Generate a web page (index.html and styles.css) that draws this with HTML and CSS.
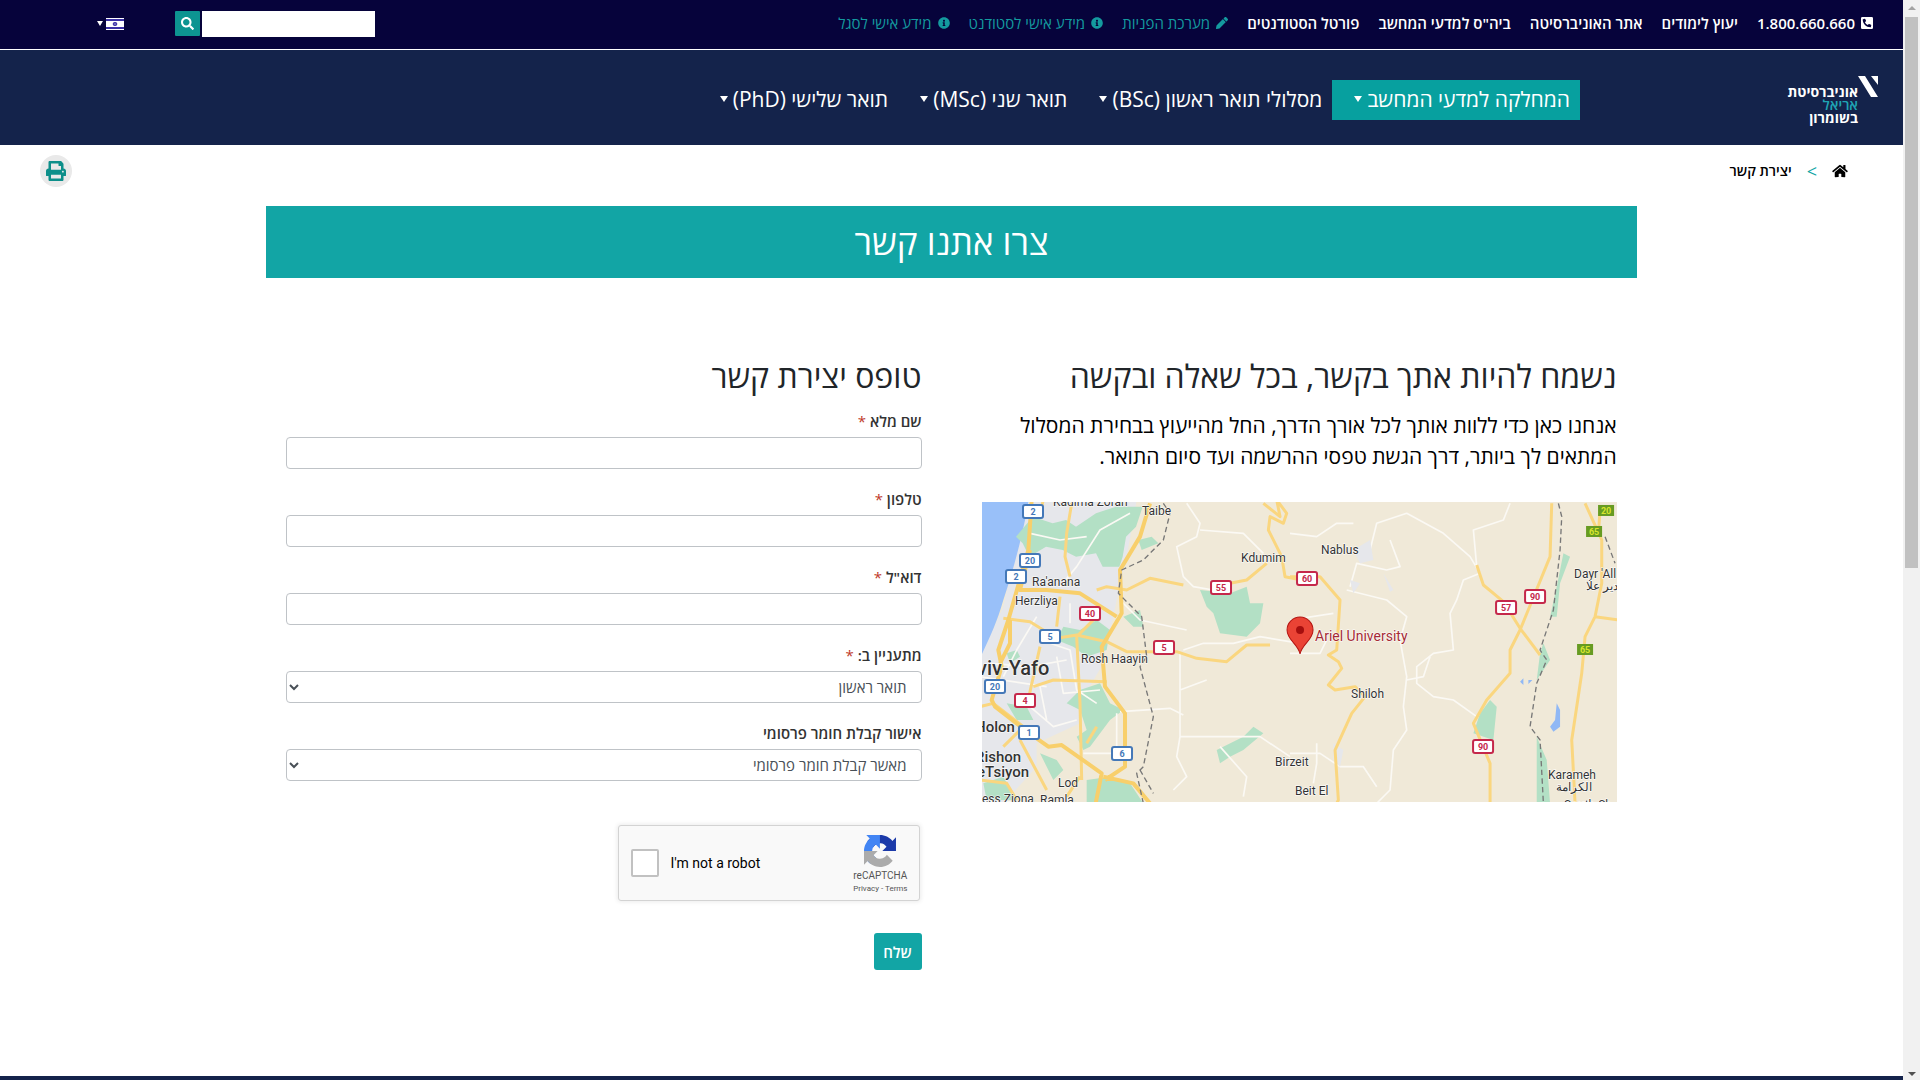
FILE: index.html
```
<!DOCTYPE html>
<html lang="he" dir="rtl">
<head>
    <meta charset="utf-8">
    <title>יצירת קשר</title>
    <link rel="stylesheet" href="styles.css">
</head>
<body>
<div class="scrollbar" aria-hidden="true">
    <span class="arrow up"></span>
    <span class="thumb"></span>
    <span class="arrow down"></span>
</div>
<div class="page">
    <div class="topbar">
        <nav class="top-links">
            <a href="tel:1800660660"><svg class="icon" viewBox="0 0 448 512"><path d="M400 32H48A48 48 0 0 0 0 80v352a48 48 0 0 0 48 48h352a48 48 0 0 0 48-48V80a48 48 0 0 0-48-48zm-16.39 307.37l-15 65A15 15 0 0 1 354 416C194 416 64 286.29 64 126a15.7 15.7 0 0 1 11.63-14.61l65-15A18.23 18.23 0 0 1 144 96a16.27 16.27 0 0 1 13.79 9.09l30 70A17.9 17.9 0 0 1 189 181a17 17 0 0 1-5.5 11.61l-37.89 31a231.91 231.91 0 0 0 110.78 110.78l31-37.89A17 17 0 0 1 299 291a17.85 17.85 0 0 1 5.91 1.21l70 30A16.25 16.25 0 0 1 384 336a17.41 17.41 0 0 1-.39 3.37z"/></svg>1.800.660.660</a>
            <a href="#">יעוץ לימודים</a>
            <a href="#">אתר האוניברסיטה</a>
            <a href="#">ביה"ס למדעי המחשב</a>
            <a href="#">פורטל הסטודנטים</a>
            <a href="#" class="teal"><svg class="icon" viewBox="0 0 512 512"><path d="M497.9 142.1l-46.1 46.1c-4.7 4.7-12.3 4.7-17 0l-111-111c-4.7-4.7-4.7-12.3 0-17l46.1-46.1c18.7-18.7 49.1-18.7 67.9 0l60.1 60.1c18.8 18.7 18.8 49.1 0 67.9zM284.2 99.8L21.6 362.4.4 483.9c-2.9 16.4 11.4 30.6 27.8 27.8l121.5-21.3 262.6-262.6c4.7-4.7 4.7-12.3 0-17l-111-111c-4.8-4.7-12.4-4.7-17.1 0z"/></svg>מערכת הפניות</a>
            <a href="#" class="teal"><svg class="icon" viewBox="0 0 512 512"><path d="M256 8C119.043 8 8 119.083 8 256c0 136.997 111.043 248 248 248s248-111.003 248-248C504 119.083 392.957 8 256 8zm0 110c23.196 0 42 18.804 42 42s-18.804 42-42 42-42-18.804-42-42 18.804-42 42-42zm56 254c0 6.627-5.373 12-12 12h-88c-6.627 0-12-5.373-12-12v-24c0-6.627 5.373-12 12-12h12v-64h-12c-6.627 0-12-5.373-12-12v-24c0-6.627 5.373-12 12-12h64c6.627 0 12 5.373 12 12v100h12c6.627 0 12 5.373 12 12v24z"/></svg>מידע אישי לסטודנט</a>
            <a href="#" class="teal"><svg class="icon" viewBox="0 0 512 512"><path d="M256 8C119.043 8 8 119.083 8 256c0 136.997 111.043 248 248 248s248-111.003 248-248C504 119.083 392.957 8 256 8zm0 110c23.196 0 42 18.804 42 42s-18.804 42-42 42-42-18.804-42-42 18.804-42 42-42zm56 254c0 6.627-5.373 12-12 12h-88c-6.627 0-12-5.373-12-12v-24c0-6.627 5.373-12 12-12h12v-64h-12c-6.627 0-12-5.373-12-12v-24c0-6.627 5.373-12 12-12h64c6.627 0 12 5.373 12 12v100h12c6.627 0 12 5.373 12 12v24z"/></svg>מידע אישי לסגל</a>
        </nav>
        <form class="search">
            <input type="text" aria-label="חיפוש">
            <button type="button" aria-label="חפש"><svg viewBox="0 0 512 512"><path d="M505 442.7L405.3 343c-4.5-4.5-10.6-7-17-7H372c27.6-35.3 44-79.7 44-128C416 93.1 322.9 0 208 0S0 93.1 0 208s93.1 208 208 208c48.3 0 92.7-16.4 128-44v16.3c0 6.4 2.5 12.5 7 17l99.7 99.7c9.4 9.4 24.6 9.4 33.9 0l28.3-28.3c9.4-9.4 9.4-24.6.1-34zM208 336c-70.7 0-128-57.2-128-128 0-70.7 57.2-128 128-128 70.7 0 128 57.2 128 128 0 70.7-57.2 128-128 128z"/></svg></button>
        </form>
        <a href="#" class="lang" aria-label="שפה">
            <svg class="flag" viewBox="0 0 18 12"><path fill="#fff" d="M0 0h18v12H0z"/><path fill="#3a2fa5" d="M0 1h18v2H0zM0 9h18v2H0z"/><path fill="none" stroke="#3a2fa5" d="M9 4l2 3H7zM9 8L7 5h4z"/></svg>
            <span class="caret"></span>
        </a>
    </div>

    <header class="header">
        <a href="#" class="logo">
            <svg viewBox="0 0 20 21"><path d="M0 0h7l13 21h-7zM13 0h7v9z"/></svg>
            <span class="logo-text">אוניברסיטת<br><em>אריאל</em><br>בשומרון</span>
        </a>
        <nav class="main-nav">
            <a href="#" class="active">המחלקה למדעי המחשב<span class="caret"></span></a>
            <a href="#">מסלולי תואר ראשון (BSc)<span class="caret"></span></a>
            <a href="#">תואר שני (MSc)<span class="caret"></span></a>
            <a href="#">תואר שלישי (PhD)<span class="caret"></span></a>
        </nav>
    </header>

    <div class="tools">
        <nav class="breadcrumb">
            <a href="#" aria-label="דף הבית"><svg viewBox="0 0 576 512"><path d="M280.37 148.26L96 300.11V464a16 16 0 0 0 16 16l112.06-.29a16 16 0 0 0 15.92-16V368a16 16 0 0 1 16-16h64a16 16 0 0 1 16 16v95.64a16 16 0 0 0 16 16.05L464 480a16 16 0 0 0 16-16V300L295.67 148.26a12.19 12.19 0 0 0-15.3 0zM571.6 251.47L488 182.56V44.05a12 12 0 0 0-12-12h-56a12 12 0 0 0-12 12v72.61L318.47 43a48 48 0 0 0-61 0L4.34 251.47a12 12 0 0 0-1.6 16.9l25.5 31A12 12 0 0 0 45.15 301l235.22-193.74a12.19 12.19 0 0 1 15.3 0L530.9 301a12 12 0 0 0 16.9-1.6l25.5-31a12 12 0 0 0-1.7-16.93z"/></svg></a>
            <span class="sep">&gt;</span>
            <span>יצירת קשר</span>
        </nav>
        <button type="button" class="print" aria-label="הדפסה"><svg viewBox="0 0 512 512"><path d="M448 192V77.25c0-8.49-3.37-16.62-9.37-22.63L393.37 9.37c-6-6-14.14-9.37-22.63-9.37H96C78.33 0 64 14.33 64 32v160c-35.35 0-64 28.65-64 64v112c0 8.84 7.16 16 16 16h48v96c0 17.67 14.33 32 32 32h320c17.67 0 32-14.33 32-32v-96h48c8.84 0 16-7.16 16-16V256c0-35.35-28.65-64-64-64zm-64 256H128v-96h256v96zm0-224H128V64h192v48c0 8.84 7.16 16 16 16h48v96zm48 72c-13.25 0-24-10.75-24-24 0-13.26 10.75-24 24-24s24 10.74 24 24c0 13.25-10.75 24-24 24z"/></svg></button>
    </div>

    <main class="container">
        <h1>צרו אתנו קשר</h1>
        <div class="columns">
            <section class="about">
                <h2>נשמח להיות אתך בקשר, בכל שאלה ובקשה</h2>
                <p>אנחנו כאן כדי ללוות אותך לכל אורך הדרך, החל מהייעוץ בבחירת המסלול המתאים לך ביותר, דרך הגשת טפסי ההרשמה ועד סיום התואר.</p>
                <svg class="map" viewBox="0 0 635 300" preserveAspectRatio="xMidYMid slice" direction="ltr">
                    <rect width="635" height="300" fill="#f0e9d8"/>
                    <!-- west -->
                    <g transform="scale(.33333) translate(-36 -36)">
                        <path class="urban" d="M170 30L500 30 470 200 440 330 400 520 330 640 330 700 200 760 200 830 100 940 30 940 30 500 100 350z"/>
                        <path class="sea" d="M30 30H176C160 130 130 240 100 330 80 400 60 440 30 505z"/>
                        <path class="park" d="M188 80l60 20 40-10 30 20 60-40 60-20 80 0-20 60-30 30-10 60-10 30-50 0-20-40-60 10-40-20-50-10-50 30-20-40-20-20zM505 150l40-10 20 20-50 20zM280 410l50 10 50-30 40 30-10 60-60 20-40-30-50-20zM460 380l50-20 10 50-30 0zM330 600l60-20 30 60 40 20-40 30-60 80-20 10-20-40 30-20-20-60-40-20zM350 870l70-10 60 20 40 60H350zM210 790l50 20 20 30-30 30zM110 640l60 10 20 40-50 0zM40 880l60-20 40 70-90 0zM690 300l90 10 50-20 10 50 40 0-10 60-40 40-80-10-20-60-20-20zM740 780l80-40 30-30 30 20-60 50-40 20-30 20zM110 490l30-10 10 20-30 20z"/>
                        <path class="lane" d="M480 70l-90 50-70 110-50 60M180 130l90 20 80-10M200 380l-60 100-40 80M240 460l60 20 20 120 60 40M180 650l70 60 70-20M60 520l120 10 110-20M210 590l20 100M300 340v60M440 670v120l-100 0M650 40l40 60-10 40-60 30 20 90 30 30 60 10M690 120l130 10 60 60M640 480l60-20 90 0 80-20 120 20M630 490l0 250-10 60 30 60-40 40M450 665l150-10 40 20M630 600l80-30M630 740l240 0 90 60M750 770l80 90-10 60M450 330l60 60 140 30M30 560l200 30M260 500l20 110 110-10"/>
                        <path class="road" d="M220 30L215 50M305 40L290 130 285 200 300 260M100 385l80 10 80 50 60-10 90 20 60 30 150 0 60 20 90 10 60-50h70M380 300l30-10 60 10 70-35 100 20M270 320l-10 90M190 590l60-20 160 5M210 470l-40 180M30 650l40-10 90 70-60 60M150 750l80 150M320 440l10 200 5 230M330 860l-40 60M380 710l-30 50M780 280l50-10 60-50M880 40l50 40-10-50 30 40-10 30-40-20-5 40 40 80 10 60 50 10M30 870l80 10 30 50M320 440l60-60"/>
                        <path class="highway" d="M185 30l-10 150-40 140-20 70-30 90 10 50-30 100 10 20 90 70 70 50 40-5 120 85-20 100M120 390l0 70-30 60M180 180l-30 120 80 0 100 10 110 70M540 40l-30 100-60 100 5 130-60 100 10 120 60 80 0 160-60 40M400 860l90 20 50 60"/>
                        <path class="border" d="M580 40l20 30-20 80-60 60-65 30-10 70 70 70 15 120-20 30 40 150-30 150-20 20 20 90M510 840l40 70"/>
                    </g>
                    <!-- east -->
                    <g transform="scale(.33333) translate(924 -36)">
                        <path class="lane" d="M0 130l80 10 60-40 50 0M240 180l20-80 90-30 110 60 80 70 30 50-50 20-20 60-20 40 10 110-60 10-50 40 0 50 50 40 60 10 70 50M660 40l-20 50-90 30 10 110M350 570l50-10 20-60M170 300l120 30 60 50-20 70 20 110-10 90 10 70-40 60-10 120-40 40M180 290l20-70 90 20 40-10-30-80M0 790l90 0 60 40 70 0 40 60M70 880l10-60 0-60M0 490l90 0 20-40M0 390l130-20"/>
                        <path class="urban" d="M190 180l50-30 10 60-40 10zM130 760l30 20-10 50-20-20zM280 250l30 50-10 5zM180 270l30 10-20 30z"/>
                        <path class="park" d="M820 190l20 10-30 80-10 100-20 0 20-90zM760 460l20 50-40 60 10-80zM600 630l20 20-10 100-60-20 20-60zM740 740l30 70 10 130-40 0z"/>
                        <path class="lake" d="M800 640l10 20 0 50-20 15-10-15 15-20zM690 575l10-10 0 20zM715 570l12 0-12 12z"/>
                        <path class="road" d="M0 260h90l60 70-10 150-25 15 30 20 10 20-40 50 20 15 60-10 30 30-40 50-50 110 10 150-30 60M560 225l20 60 60 50 50 80 60 80M785 40l-5 160-90 220-30 60 0 70-70 80-40 70 50 120 0 120M885 40l50 110 0 130-20 100-30 60-10 110-30 200 10 190M915 380l70 10M930 60l-5 70"/>
                        <path class="border" d="M805 40l10 40-5 100-20 180-20 60-20 60 20 30-30 70-20 130 30 40 10 190M945 140l30 80"/>
                    </g>
                    <!-- place names -->
                    <g class="places">
                        <text x="71" y="4">Kadima Zoran</text>
                        <text x="160" y="13">Taibe</text>
                        <text x="50" y="84">Ra'anana</text>
                        <text x="33" y="103">Herzliya</text>
                        <text x="99" y="161">Rosh Haayin</text>
                        <text x="76" y="285">Lod</text>
                        <text x="58" y="302">Ramla</text>
                        <text x="0" y="301">ess Ziona</text>
                        <text x="259" y="60">Kdumim</text>
                        <text x="339" y="52">Nablus</text>
                        <text x="369" y="196">Shiloh</text>
                        <text x="293" y="264">Birzeit</text>
                        <text x="313" y="293">Beit El</text>
                        <text x="592" y="76">Dayr 'All</text>
                        <text x="604" y="88">دير علا</text>
                        <text x="566" y="277">Karameh</text>
                        <text x="574" y="289">الكرامة</text>
                        <text x="582" y="307">South Sh</text>
                        <text class="mid" x="-7" y="230">Holon</text>
                        <text class="mid" x="-7" y="260">Rishon</text>
                        <text class="mid" x="-5" y="275">eTsiyon</text>
                        <text class="big" x="-5" y="173">viv-Yafo</text>
                        <text class="pin-label" x="333" y="139">Ariel University</text>
                    </g>
                    <g class="shield blue">
                        <rect x="41" y="3" width="20" height="13" rx="2"/><text x="51" y="13">2</text>
                        <rect x="38" y="52" width="20" height="13" rx="2"/><text x="48" y="62">20</text>
                        <rect x="24" y="68" width="20" height="13" rx="2"/><text x="34" y="78">2</text>
                        <rect x="58" y="128" width="20" height="13" rx="2"/><text x="68" y="138">5</text>
                        <rect x="3" y="178" width="20" height="13" rx="2"/><text x="13" y="188">20</text>
                        <rect x="37" y="224" width="20" height="13" rx="2"/><text x="47" y="234">1</text>
                        <rect x="130" y="245" width="20" height="13" rx="2"/><text x="140" y="255">6</text>
                    </g>
                    <g class="shield red">
                        <rect x="98" y="105" width="20" height="13" rx="2"/><text x="108" y="115">40</text>
                        <rect x="229" y="79" width="20" height="13" rx="2"/><text x="239" y="89">55</text>
                        <rect x="172" y="139" width="20" height="13" rx="2"/><text x="182" y="149">5</text>
                        <rect x="33" y="192" width="20" height="13" rx="2"/><text x="43" y="202">4</text>
                        <rect x="315" y="70" width="20" height="13" rx="2"/><text x="325" y="80">60</text>
                        <rect x="514" y="99" width="20" height="13" rx="2"/><text x="524" y="109">57</text>
                        <rect x="543" y="88" width="20" height="13" rx="2"/><text x="553" y="98">90</text>
                        <rect x="491" y="238" width="20" height="13" rx="2"/><text x="501" y="248">90</text>
                    </g>
                    <g class="shield green">
                        <rect x="616" y="3" width="16" height="11"/><text x="624" y="12">20</text>
                        <rect x="604" y="24" width="16" height="11"/><text x="612" y="33">65</text>
                        <rect x="595" y="142" width="16" height="11"/><text x="603" y="151">65</text>
                    </g>
                    <path fill="#ea4335" stroke="#b31412" d="M318 152c-2-10-13-14-13-24a13 13 0 0 1 26 0c0 10-11 14-13 24z"/>
                    <circle cx="318" cy="128" r="4" fill="#a50e0e"/>
                </svg>
            </section>

            <section>
                <h2>טופס יצירת קשר</h2>
                <form class="contact-form">
                    <div class="field">
                        <label for="name">שם מלא <span class="req">*</span></label>
                        <input type="text" id="name">
                    </div>
                    <div class="field">
                        <label for="phone">טלפון <span class="req">*</span></label>
                        <input type="tel" id="phone">
                    </div>
                    <div class="field">
                        <label for="email">דוא"ל <span class="req">*</span></label>
                        <input type="email" id="email">
                    </div>
                    <div class="field">
                        <label for="interest">מתעניין ב: <span class="req">*</span></label>
                        <select id="interest"><option>תואר ראשון</option><option>תואר שני</option></select>
                    </div>
                    <div class="field">
                        <label for="ads">אישור קבלת חומר פרסומי</label>
                        <select id="ads"><option>מאשר קבלת חומר פרסומי</option></select>
                    </div>
                    <div class="captcha" dir="ltr">
                        <input type="checkbox" id="robot">
                        <label for="robot">I'm not a robot</label>
                        <div class="captcha-brand">
                            <svg viewBox="0 0 64 64"><path fill="#1c3aa9" d="M64 31.955l-.033-1.37V4.687l-7.16 7.16C50.948 4.674 42.033.093 32.05.093c-10.4 0-19.622 4.96-25.458 12.64l11.736 11.86a15.55 15.55 0 0 1 4.754-5.334c2.05-1.6 4.952-2.906 8.968-2.906.485 0 .86.057 1.135.163 4.976.393 9.288 3.14 11.828 7.124l-8.307 8.307L64 31.953"/><path fill="#4285f4" d="M31.862.094l-1.37.033H4.594l7.16 7.16C4.58 13.147 0 22.06 0 32.046c0 10.4 4.96 19.622 12.64 25.458L24.5 45.768a15.55 15.55 0 0 1-5.334-4.754c-1.6-2.05-2.906-4.952-2.906-8.968 0-.485.057-.86.163-1.135.393-4.976 3.14-9.288 7.124-11.828l8.307 8.307L31.86.095"/><path fill="#ababab" d="M.001 32.045l.033 1.37v25.898l7.16-7.16c5.86 7.173 14.774 11.754 24.76 11.754 10.4 0 19.622-4.96 25.458-12.64l-11.736-11.86a15.55 15.55 0 0 1-4.754 5.334c-2.05 1.6-4.952 2.906-8.968 2.906-.485 0-.86-.057-1.135-.163-4.976-.393-9.288-3.14-11.828-7.124l8.307-8.307c-10.522.04-22.4.066-27.295-.005"/></svg>
                            <span class="captcha-name">reCAPTCHA</span>
                            <span class="captcha-links"><a href="#">Privacy</a> - <a href="#">Terms</a></span>
                        </div>
                    </div>
                    <button type="button" class="submit">שלח</button>
                </form>
            </section>
        </div>
    </main>
    <footer class="footer"></footer>
</div>
</body>
</html>
```
FILE: styles.css
```
* { box-sizing: border-box; }
html, body { height: 100%; }
body { margin: 0; display: flex; overflow: hidden; background: #fff; color: #212529; font-family: "Open Sans", "Noto Sans Hebrew", Arial, sans-serif; font-size: 15px; }
a { color: inherit; text-decoration: none; }
svg { fill: currentColor; display: block; }
input, select, button { font-family: inherit; font-size: 15px; }

/* פס גלילה */
.scrollbar { width: 17px; height: 100vh; background: #f1f1f1; display: flex; flex-direction: column; align-items: center; flex-shrink: 0; }
.thumb { width: 13px; flex: 0 0 51%; background: #c1c1c1; }
.arrow { border: 4px solid transparent; margin: 4px 0; }
.arrow.up { border-bottom-color: #a3a3a3; border-top: 0; margin: 6px 0 7px; }
.arrow.down { border-top-color: #505050; border-bottom: 0; margin-top: auto; }

.page { flex: 1; display: flex; flex-direction: column; min-height: 100vh; }

/* סרגל עליון */
.topbar { display: flex; align-items: center; height: 50px; padding: 0 30px 2px 97px; background: #06033b; border-bottom: 1px solid #fff; color: #fff; }
.top-links { display: flex; gap: 19px; font-weight: 600; line-height: 20px; padding-bottom: 2px; }
.top-links a { display: flex; align-items: center; gap: 6px; }
.top-links .teal { color: #149a9f; font-weight: 400; }
.icon { width: 12px; height: 14px; }
.search { display: flex; gap: 2px; margin-right: auto; }
.search input { width: 173px; height: 26px; border: 0; background: #fff; }
.search button { width: 25px; height: 25px; padding: 6px; border: 0; border-radius: 1px; background: #0d9491; color: #fff; }
.lang { display: flex; align-items: center; gap: 3px; margin-right: 51px; }
.flag { width: 18px; height: 12px; }
.caret { border: 3px solid transparent; border-top: 5px solid currentColor; border-bottom: 0; }

/* תפריט ראשי */
.header { display: flex; align-items: center; height: 95px; padding: 4px 25px 0; background: #14234b; color: #fff; }
.logo { display: flex; width: 91px; }
.logo svg { width: 20px; height: 21px; flex-shrink: 0; }
.logo-text { padding-top: 9px; font-size: 14px; font-weight: 700; line-height: 13px; }
.logo em { font-style: normal; font-weight: 600; color: #1fa5b5; }
.main-nav { display: flex; margin-right: 207px; font-size: 21px; }
.main-nav a { display: flex; align-items: center; gap: 5px; height: 40px; padding: 0 10px 2px 22px; }
.main-nav .caret { border-width: 6px 4px 0; }
.main-nav .active { background: #07a09f; }

/* פירורי לחם */
.tools { display: flex; align-items: center; justify-content: space-between; height: 61px; padding: 0 55px 10px 40px; }
.breadcrumb { display: flex; align-items: center; gap: 15px; color: #000; font-size: 14px; font-weight: 600; }
.breadcrumb svg { width: 16px; height: 14px; }
.sep { color: #12a5a5; font-size: 18px; font-weight: 400; line-height: 20px; }
.print { width: 32px; height: 32px; padding: 6px; border: 0; border-radius: 50%; background: #e9e9e9; color: #0d8f8a; }

/* תוכן */
.container { width: 72%; margin: 0 auto; flex: 1; }
h1 { margin: 0; background: #12a5a5; color: #fff; font-size: 35px; font-weight: 400; line-height: 72px; text-align: center; }
h2 { margin: 0; font-size: 32px; font-weight: 400; line-height: 36px; }
.columns { display: grid; grid-template-columns: 1fr 1fr; gap: 60px; padding: 80px 20px; }
.about p { margin: 16px 0 30px; color: #000; font-size: 21px; line-height: 31px; }
.map { width: 100%; height: 300px; overflow: hidden; }

/* מפה */
.urban { fill: #e6e7eb; }
.sea { fill: #99c0f9; }
.park { fill: #b3e0c5; }
.lake { fill: #90b8f5; }
.lane, .road, .highway, .border { fill: none; stroke-linejoin: round; }
.lane { stroke: #fbf9f4; stroke-width: 5; }
.road { stroke: #fad67f; stroke-width: 9; }
.highway { stroke: #f8cf6b; stroke-width: 12; }
.border { stroke: #777; stroke-width: 4; stroke-dasharray: 16 10; }
.map text { font-family: Roboto, sans-serif; }
.places { font-size: 12px; fill: #333; paint-order: stroke; stroke: #fff; stroke-width: 1px; }
.places .mid { font-size: 15px; font-weight: 500; }
.places .big { font-size: 20px; font-weight: 500; }
.places .pin-label { font-size: 14px; fill: #a52a34; }
.shield { font-size: 9px; font-weight: 700; text-anchor: middle; stroke-width: 2px; }
.shield rect { fill: #fff; }
.shield text { stroke: none; }
.blue { stroke: #4478b8; fill: #4478b8; }
.red { stroke: #c5284b; fill: #c5284b; }
.green { stroke: none; fill: #d7e52d; }
.green rect { fill: #679b22; }

/* טופס */
.contact-form { margin-top: 17px; color: #333; }
.field { margin-bottom: 20px; }
.field label { display: block; margin-bottom: 6px; font-weight: 600; line-height: 20px; }
.req { color: #c0392b; font-weight: 400; }
.field input, .field select { display: block; width: 100%; height: 32px; padding: 0 10px; border: 1px solid #bfc3c7; border-radius: 4px; background: #fff; color: #495057; }
.captcha { display: flex; align-items: center; width: 302px; height: 76px; margin: 44px 2px 32px; padding: 0 11px 0 12px; border: 1px solid #d3d3d3; border-radius: 3px; background: #f9f9f9; box-shadow: 0 0 4px 1px rgba(0,0,0,0.08); font-family: Roboto, sans-serif; font-size: 14px; color: #000; }
.captcha input { appearance: none; width: 28px; height: 28px; margin: 0 12px 0 0; border: 2px solid #c1c1c1; border-radius: 2px; background: #fff; }
.captcha-brand { display: flex; flex-direction: column; align-items: center; margin-left: auto; padding-top: 4px; color: #555; }
.captcha-brand svg { width: 32px; height: 32px; }
.captcha-name { font-size: 10px; line-height: 14px; margin-top: 2px; }
.captcha-links { font-size: 8px; line-height: 12px; }
.submit { width: 48px; height: 37px; padding: 0; border: 0; border-radius: 3px; background: #12a5a5; color: #fff; font-weight: 600; }

.footer { height: 4px; background: #14234b; }
```
